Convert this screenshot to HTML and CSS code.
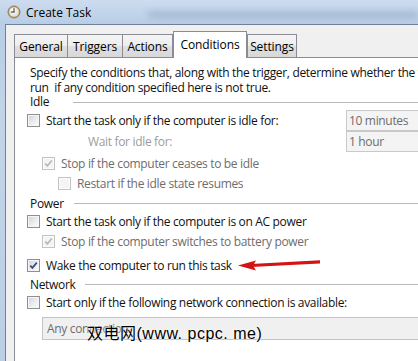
FILE: index.html
```html
<!DOCTYPE html>
<html>
<head>
<meta charset="utf-8">
<link rel="stylesheet" href="styles.css">
</head>
<body>
<div class="window">
  <div class="titlebar">
    <svg class="clock" width="14" height="14" viewBox="0 0 14 14">
      <defs>
        <radialGradient id="face" cx="40%" cy="35%" r="70%">
          <stop offset="0" stop-color="#ffffff"/>
          <stop offset="1" stop-color="#dcdcdc"/>
        </radialGradient>
      </defs>
      <circle cx="7" cy="7" r="6" fill="#c9b27a" stroke="#7a6a44" stroke-width="0.8"/>
      <circle cx="7" cy="7" r="4.6" fill="url(#face)"/>
      <path d="M7 7V3.6M7 7H4.2" stroke="#333" stroke-width="1" fill="none" stroke-linecap="round"/>
    </svg>
    <span class="title">Create Task</span>
    <div class="glass"></div>
  </div>
  <div class="frame">
    <div class="client">
      <div class="tabs">
        <div class="tab t-general">General</div>
        <div class="tab t-triggers">Triggers</div>
        <div class="tab t-actions">Actions</div>
        <div class="tab active t-conditions">Conditions</div>
        <div class="tab t-settings">Settings</div>
      </div>
      <div class="panel">
        <p class="desc">Specify the conditions that, along with the trigger, determine whether the task should<br>run&nbsp; if any condition specified here is not true.</p>

        <div class="hdr hdr-idle"><span class="hlabel">Idle</span><div class="sep"></div></div>

        <div class="row mt3">
          <span class="cb"></span><span>Start the task only if the computer is idle for:</span>
          <div class="combo">10 minutes</div>
        </div>
        <div class="row mt5 lwait">
          <span class="faint">Wait for idle for:</span>
          <div class="combo">1 hour</div>
        </div>
        <div class="row mt6 l1">
          <span class="cb dis"><svg viewBox="0 0 11 11" width="11" height="11"><path d="M2.3 5.6L4.4 7.9L8.8 2.6" fill="none" stroke="#b4b4b4" stroke-width="1.6"/></svg></span><span class="dim">Stop if the computer ceases to be idle</span>
        </div>
        <div class="row mt4 l2">
          <span class="cb dis"></span><span class="dim">Restart if the idle state resumes</span>
        </div>

        <div class="hdr mt4"><span class="hlabel">Power</span><div class="sep"></div></div>

        <div class="row mt2">
          <span class="cb"></span><span>Start the task only if the computer is on AC power</span>
        </div>
        <div class="row mt4 l1">
          <span class="cb dis"><svg viewBox="0 0 11 11" width="11" height="11"><path d="M2.3 5.6L4.4 7.9L8.8 2.6" fill="none" stroke="#b4b4b4" stroke-width="1.6"/></svg></span><span class="dim">Stop if the computer switches to battery power</span>
        </div>
        <div class="row mt8">
          <span class="cb"><svg viewBox="0 0 11 11" width="11" height="11"><path d="M2.3 5.6L4.4 7.9L8.8 2.6" fill="none" stroke="#3c4d78" stroke-width="1.7"/></svg></span><span>Wake the computer to run this task</span>
        </div>

        <div class="hdr mt3"><span class="hlabel">Network</span><div class="sep"></div></div>

        <div class="row mt2">
          <span class="cb"></span><span>Start only if the following network connection is available:</span>
        </div>
        <div class="combo wide mt7">Any connection</div>
      </div>
    </div>
  </div>

  <svg class="arrow" width="88" height="18" viewBox="0 0 88 18">
    <polygon points="2,9.5 20,4.5 17,9.5 20,14.5" fill="#d41414"/>
    <polygon points="15,8 84,4.2 84,7.6 15,11" fill="#d41414"/>
  </svg>
  <div class="watermark">双电网(www. pcpc. me)</div>
</div>
</body>
</html>
```

FILE: styles.css
```css
* { box-sizing: border-box; }
html, body { margin: 0; padding: 0; }
body {
  width: 418px;
  height: 361px;
  overflow: hidden;
  font-family: "Open Sans", "Noto Sans", sans-serif;
  font-size: 12px;
  line-height: 15px;
  letter-spacing: -0.33px;
  color: #111;
  background: #f0f0f0;
}
.window {
  position: relative;
  width: 418px;
  height: 361px;
  display: flex;
  flex-direction: column;
  background: linear-gradient(#cddcef, #b8cde6 24px, #c3d4e8 120px, #bccfe5);
  overflow: hidden;
}
.titlebar {
  flex: none;
  height: 24px;
  display: flex;
  align-items: center;
  padding-left: 7px;
}
.clock { flex: none; }
.title { margin-left: 5px; color: #000; letter-spacing: 0; }
.glass {
  margin-left: auto;
  margin-top: 4px;
  width: 270px;
  height: 7px;
  background: rgba(95, 115, 145, 0.25);
  filter: blur(3px);
}
.frame {
  flex: 1;
  display: flex;
  padding-left: 5px;
  min-height: 0;
}
.client {
  flex: 1;
  min-width: 0;
  background: #f0f0f0;
  border-top: 1px solid #6f8196;
  border-left: 1px solid #6f8196;
  padding: 6px 0 0 8px;
}
.tabs {
  display: flex;
  align-items: flex-end;
  height: 26px;
}
.tab {
  height: 23px;
  border: 1px solid #898c95;
  border-bottom: none;
  background: linear-gradient(#f5f5f5, #ededed 50%, #e0e0e0 50%, #d8d8d8);
  display: flex;
  align-items: center;
  justify-content: center;
  color: #000;
  flex: none;
  letter-spacing: -0.1px;
}
.t-general { width: 54px; }
.t-triggers { width: 56px; margin-left: -1px; }
.t-actions { width: 51px; margin-left: -1px; }
.t-conditions { width: 74px; margin-left: 0; }
.t-settings { width: 50px; margin-left: 0; }
.tab.active {
  height: 27px;
  margin-bottom: -1px;
  background: #fff;
  position: relative;
  z-index: 1;
  padding-bottom: 2px;
}
.panel {
  width: 463px;
  height: 320px;
  background: #fff;
  border: 1px solid #898c95;
  padding: 7px 10px 0 12px;
}
.desc {
  margin: 0;
  padding-left: 3px;
  line-height: 15px;
  white-space: nowrap;
}
.hdr {
  display: flex;
  align-items: center;
  height: 16px;
  padding-left: 3px;
  white-space: nowrap;
}
.hdr-idle { height: 14px; line-height: 14px; }
.hlabel { min-width: 43px; padding-right: 10px; }
.sep { flex: 1; border-top: 1px solid #b9b9b9; }
.row {
  display: flex;
  align-items: center;
  height: 16px;
  white-space: nowrap;
}
.l1 { padding-left: 15px; }
.l2 { padding-left: 31px; }
.lwait { padding-left: 61px; }
.cb {
  flex: none;
  width: 13px;
  height: 13px;
  margin-right: 6px;
  border: 1px solid #8e8f8f;
  background: linear-gradient(135deg, #cfd2d7, #eeeff0 60%, #fbfbfb);
  box-shadow: inset 0 0 0 1px #f6f6f6;
  display: flex;
  align-items: center;
  justify-content: center;
}
.cb svg { display: block; }
.cb.dis {
  border-color: #c3c3c3;
  background: #f4f4f4;
  box-shadow: inset 0 0 0 1px #fbfbfb;
}
.dim { color: #6d6d6d; }
.faint { color: #9c9c9c; }
.combo {
  margin-left: auto;
  width: 120px;
  height: 21px;
  border: 1px solid #c9c9c9;
  background: #f4f4f4;
  color: #6d6d6d;
  padding-left: 2px;
  display: flex;
  align-items: center;
  flex: none;
}
.combo.wide {
  margin-left: 15px;
  width: 420px;
  height: 23px;
  padding-left: 4px;
  border-color: #c4c4c4;
  background: #f0f0f0;
}
.mt2 { margin-top: 2px; }
.mt3 { margin-top: 3px; }
.mt4 { margin-top: 4px; }
.mt5 { margin-top: 5px; }
.mt6 { margin-top: 6px; }
.mt7 { margin-top: 7px; }
.mt8 { margin-top: 8px; }
.arrow {
  position: absolute;
  left: 236px;
  top: 256px;
}
.watermark {
  position: absolute;
  left: 87px;
  top: 324px;
  font-family: "Liberation Sans", "Noto Sans CJK SC", sans-serif;
  font-size: 16px;
  line-height: 20px;
  letter-spacing: 0.5px;
  color: #000;
  white-space: nowrap;
  text-shadow: 0 0 2px #fff, 0 0 2px #fff;
}
```
